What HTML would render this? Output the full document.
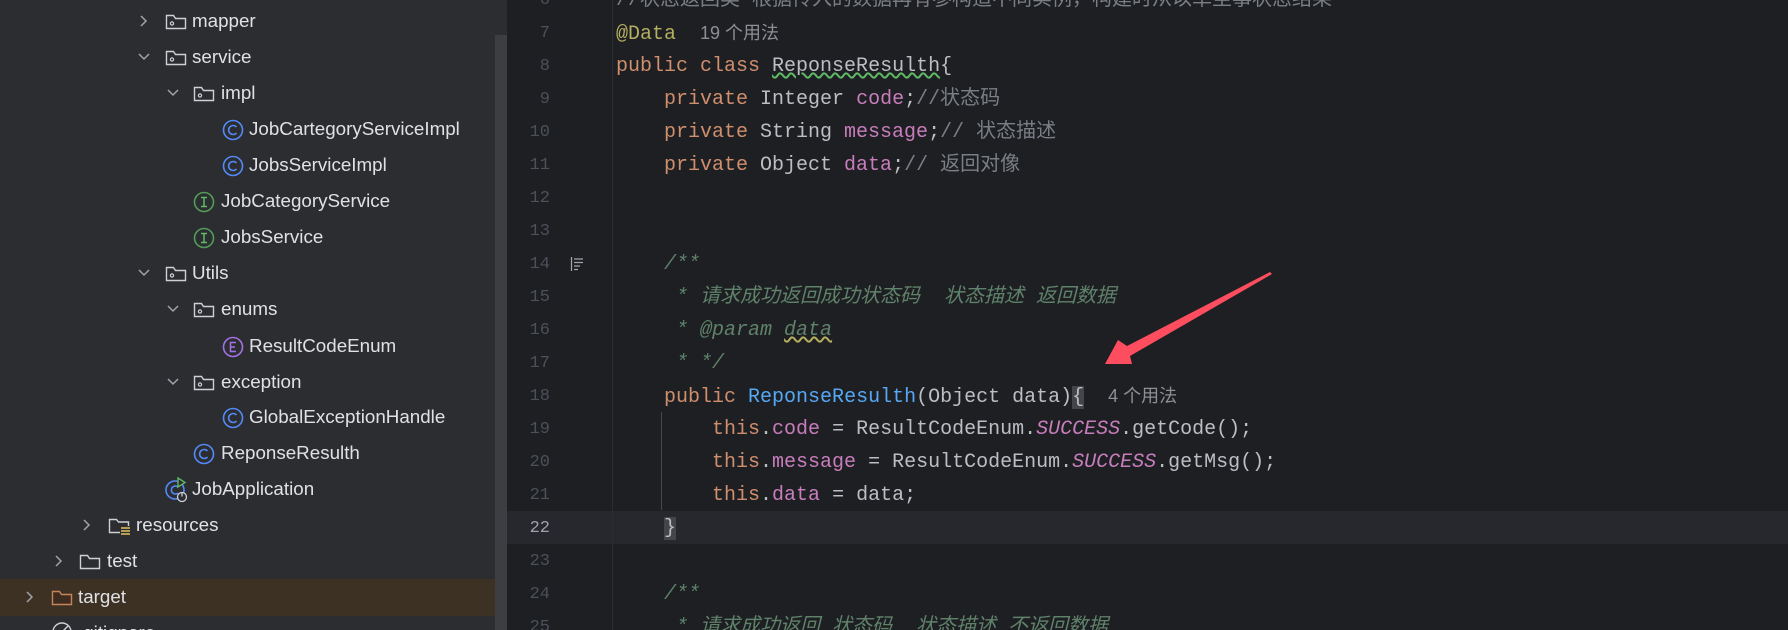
<!DOCTYPE html>
<html><head><meta charset="utf-8"><style>
*{margin:0;padding:0;box-sizing:border-box}
html,body{width:1788px;height:630px;overflow:hidden}
body{background:#1e1f22;position:relative;font-family:"Liberation Sans","Noto Sans CJK SC",sans-serif}
#side{position:absolute;left:0;top:0;width:507px;height:630px;background:#2b2d30}
#sb{position:absolute;left:495px;top:35px;width:12px;height:595px;background:#3c3e42}
.row{position:absolute;left:0;width:495px;height:36px;line-height:36px;color:#dfe1e5;font-size:18.8px;white-space:nowrap}
.row svg{position:absolute}
.row span{position:absolute}
.ln{position:absolute;left:500px;width:50px;text-align:right;color:#4b5059;font-family:"Liberation Mono",monospace;font-size:17px;height:33px;line-height:33px}
.cl{position:absolute;left:616px;height:33px;line-height:33px;font-family:"Liberation Mono","Noto Sans CJK SC",monospace;font-size:20px;color:#bcbec4;white-space:pre}
.k{color:#cf8e6d}.f{color:#c77dbb}.c{color:#7a7e85}.d{color:#5f826b;font-style:italic}.h{color:#8c8f94;font-family:"Liberation Sans","Noto Sans CJK SC",sans-serif;font-size:18px}.m{color:#56a8f5}.a{color:#b3ae60}.s{color:#c77dbb;font-style:italic}
.br{background:#43454a}
</style></head><body>
<div id="side">
<div id="sb"></div>
<div style="position:absolute;left:0;top:579px;width:495px;height:37px;background:#3d3124"></div>
</div>
<div class="row" style="top:3px"><svg style="left:138px;top:11px" width="12" height="14" viewBox="0 0 12 14"><path d="M3 2l5 5-5 5" stroke="#a0a3a8" stroke-width="1.5" fill="none"/></svg><svg style="left:165px;top:10px" width="22" height="18" viewBox="0 0 22 18"><path d="M1.5 3.5v12h19v-10h-10l-2-3h-7z" stroke="#ced0d6" stroke-width="1.4" fill="none"/><circle cx="7" cy="10.5" r="1.6" stroke="#ced0d6" stroke-width="1.2" fill="none"/></svg><span style="left:192px">mapper</span></div>
<div class="row" style="top:39px"><svg style="left:137px;top:12px" width="14" height="12" viewBox="0 0 14 12"><path d="M2 3l5 5 5-5" stroke="#a0a3a8" stroke-width="1.5" fill="none"/></svg><svg style="left:165px;top:10px" width="22" height="18" viewBox="0 0 22 18"><path d="M1.5 3.5v12h19v-10h-10l-2-3h-7z" stroke="#ced0d6" stroke-width="1.4" fill="none"/><circle cx="7" cy="10.5" r="1.6" stroke="#ced0d6" stroke-width="1.2" fill="none"/></svg><span style="left:192px">service</span></div>
<div class="row" style="top:75px"><svg style="left:166px;top:12px" width="14" height="12" viewBox="0 0 14 12"><path d="M2 3l5 5 5-5" stroke="#a0a3a8" stroke-width="1.5" fill="none"/></svg><svg style="left:193px;top:10px" width="22" height="18" viewBox="0 0 22 18"><path d="M1.5 3.5v12h19v-10h-10l-2-3h-7z" stroke="#ced0d6" stroke-width="1.4" fill="none"/><circle cx="7" cy="10.5" r="1.6" stroke="#ced0d6" stroke-width="1.2" fill="none"/></svg><span style="left:221px">impl</span></div>
<div class="row" style="top:111px"><svg style="left:222px;top:8px" width="22" height="22" viewBox="0 0 22 22"><circle cx="11" cy="11" r="9.5" stroke="#548af7" stroke-width="1.6" fill="none"/><path d="M14.5 8a4.5 4.5 0 1 0 0 6" stroke="#548af7" stroke-width="1.6" fill="none"/></svg><span style="left:249px">JobCartegoryServiceImpl</span></div>
<div class="row" style="top:147px"><svg style="left:222px;top:8px" width="22" height="22" viewBox="0 0 22 22"><circle cx="11" cy="11" r="9.5" stroke="#548af7" stroke-width="1.6" fill="none"/><path d="M14.5 8a4.5 4.5 0 1 0 0 6" stroke="#548af7" stroke-width="1.6" fill="none"/></svg><span style="left:249px">JobsServiceImpl</span></div>
<div class="row" style="top:183px"><svg style="left:193px;top:8px" width="22" height="22" viewBox="0 0 22 22"><circle cx="11" cy="11" r="9.5" stroke="#5fb865" stroke-width="1.6" fill="none" opacity=".8"/><path d="M8 6.5h6M8 15.5h6M11 6.5v9" stroke="#5fb865" stroke-width="1.5"/></svg><span style="left:221px">JobCategoryService</span></div>
<div class="row" style="top:219px"><svg style="left:193px;top:8px" width="22" height="22" viewBox="0 0 22 22"><circle cx="11" cy="11" r="9.5" stroke="#5fb865" stroke-width="1.6" fill="none" opacity=".8"/><path d="M8 6.5h6M8 15.5h6M11 6.5v9" stroke="#5fb865" stroke-width="1.5"/></svg><span style="left:221px">JobsService</span></div>
<div class="row" style="top:255px"><svg style="left:137px;top:12px" width="14" height="12" viewBox="0 0 14 12"><path d="M2 3l5 5 5-5" stroke="#a0a3a8" stroke-width="1.5" fill="none"/></svg><svg style="left:165px;top:10px" width="22" height="18" viewBox="0 0 22 18"><path d="M1.5 3.5v12h19v-10h-10l-2-3h-7z" stroke="#ced0d6" stroke-width="1.4" fill="none"/><circle cx="7" cy="10.5" r="1.6" stroke="#ced0d6" stroke-width="1.2" fill="none"/></svg><span style="left:192px">Utils</span></div>
<div class="row" style="top:291px"><svg style="left:166px;top:12px" width="14" height="12" viewBox="0 0 14 12"><path d="M2 3l5 5 5-5" stroke="#a0a3a8" stroke-width="1.5" fill="none"/></svg><svg style="left:193px;top:10px" width="22" height="18" viewBox="0 0 22 18"><path d="M1.5 3.5v12h19v-10h-10l-2-3h-7z" stroke="#ced0d6" stroke-width="1.4" fill="none"/><circle cx="7" cy="10.5" r="1.6" stroke="#ced0d6" stroke-width="1.2" fill="none"/></svg><span style="left:221px">enums</span></div>
<div class="row" style="top:328px"><svg style="left:222px;top:8px" width="22" height="22" viewBox="0 0 22 22"><circle cx="11" cy="11" r="9.5" stroke="#a571e6" stroke-width="1.6" fill="none"/><path d="M14 6.5H8.5v9H14M8.5 11H13" stroke="#a571e6" stroke-width="1.5" fill="none"/></svg><span style="left:249px">ResultCodeEnum</span></div>
<div class="row" style="top:364px"><svg style="left:166px;top:12px" width="14" height="12" viewBox="0 0 14 12"><path d="M2 3l5 5 5-5" stroke="#a0a3a8" stroke-width="1.5" fill="none"/></svg><svg style="left:193px;top:10px" width="22" height="18" viewBox="0 0 22 18"><path d="M1.5 3.5v12h19v-10h-10l-2-3h-7z" stroke="#ced0d6" stroke-width="1.4" fill="none"/><circle cx="7" cy="10.5" r="1.6" stroke="#ced0d6" stroke-width="1.2" fill="none"/></svg><span style="left:221px">exception</span></div>
<div class="row" style="top:399px"><svg style="left:222px;top:8px" width="22" height="22" viewBox="0 0 22 22"><circle cx="11" cy="11" r="9.5" stroke="#548af7" stroke-width="1.6" fill="none"/><path d="M14.5 8a4.5 4.5 0 1 0 0 6" stroke="#548af7" stroke-width="1.6" fill="none"/></svg><span style="left:249px">GlobalExceptionHandle</span></div>
<div class="row" style="top:435px"><svg style="left:193px;top:8px" width="22" height="22" viewBox="0 0 22 22"><circle cx="11" cy="11" r="9.5" stroke="#548af7" stroke-width="1.6" fill="none"/><path d="M14.5 8a4.5 4.5 0 1 0 0 6" stroke="#548af7" stroke-width="1.6" fill="none"/></svg><span style="left:221px">ReponseResulth</span></div>
<div class="row" style="top:471px"><svg style="left:165px;top:6px" width="24" height="26" viewBox="0 0 24 26"><circle cx="10" cy="13" r="9" stroke="#548af7" stroke-width="1.6" fill="none"/><path d="M13 10a4 4 0 1 0 0 6" stroke="#548af7" stroke-width="1.6" fill="none"/><path d="M13 1v9l7-4.5z" fill="#2b2d30" stroke="#5fb865" stroke-width="1.4"/><circle cx="17" cy="20" r="4.5" fill="#2b2d30" stroke="#ced0d6" stroke-width="1.3"/><path d="M17 15.5v4" stroke="#ced0d6" stroke-width="1.3"/></svg><span style="left:192px">JobApplication</span></div>
<div class="row" style="top:507px"><svg style="left:81px;top:11px" width="12" height="14" viewBox="0 0 12 14"><path d="M3 2l5 5-5 5" stroke="#a0a3a8" stroke-width="1.5" fill="none"/></svg><svg style="left:108px;top:9px" width="24" height="20" viewBox="0 0 24 20"><path d="M12 16.5H1.5v-13h7l2 2.5h10v4" stroke="#ced0d6" stroke-width="1.4" fill="none"/><path d="M13 12h9M13 15h9M13 18h9" stroke="#e5c15c" stroke-width="1.6"/></svg><span style="left:136px">resources</span></div>
<div class="row" style="top:543px"><svg style="left:53px;top:11px" width="12" height="14" viewBox="0 0 12 14"><path d="M3 2l5 5-5 5" stroke="#a0a3a8" stroke-width="1.5" fill="none"/></svg><svg style="left:79px;top:10px" width="22" height="18" viewBox="0 0 22 18"><path d="M1.5 3.5v12h19v-10h-10l-2-3h-7z" stroke="#ced0d6" stroke-width="1.4" fill="none"/></svg><span style="left:107px">test</span></div>
<div class="row" style="top:579px"><svg style="left:24px;top:11px" width="12" height="14" viewBox="0 0 12 14"><path d="M3 2l5 5-5 5" stroke="#a0a3a8" stroke-width="1.5" fill="none"/></svg><svg style="left:51px;top:10px" width="22" height="18" viewBox="0 0 22 18"><path d="M1.5 3.5v12h19v-10h-10l-2-3h-7z" stroke="#c7845a" stroke-width="1.4" fill="#3f2c20"/></svg><span style="left:78px">target</span></div>
<div class="row" style="top:615px"><svg style="left:51px;top:6px" width="24" height="24" viewBox="0 0 24 24"><circle cx="11" cy="11" r="9" stroke="#ced0d6" stroke-width="1.4" fill="none"/><path d="M5 17L17 5" stroke="#ced0d6" stroke-width="1.4"/></svg><span style="left:78px">.gitignore</span></div>

<div style="position:absolute;left:507px;top:511px;width:1281px;height:33px;background:#26282e"></div>
<div style="position:absolute;left:612px;top:0;width:1px;height:630px;background:#2b2d30"></div>
<div style="position:absolute;left:661px;top:412px;width:1px;height:98px;background:#46484d"></div>

<div class="ln" style="top:-16px">6</div>
<div class="ln" style="top:17px">7</div>
<div class="ln" style="top:50px">8</div>
<div class="ln" style="top:83px">9</div>
<div class="ln" style="top:116px">10</div>
<div class="ln" style="top:149px">11</div>
<div class="ln" style="top:182px">12</div>
<div class="ln" style="top:215px">13</div>
<div class="ln" style="top:248px">14</div>
<div class="ln" style="top:281px">15</div>
<div class="ln" style="top:314px">16</div>
<div class="ln" style="top:347px">17</div>
<div class="ln" style="top:380px">18</div>
<div class="ln" style="top:413px">19</div>
<div class="ln" style="top:446px">20</div>
<div class="ln" style="top:479px">21</div>
<div class="ln" style="top:512px;color:#a1a3ab">22</div>
<div class="ln" style="top:545px">23</div>
<div class="ln" style="top:578px">24</div>
<div class="ln" style="top:611px">25</div>
<svg style="position:absolute;left:570px;top:257px" width="14" height="14" viewBox="0 0 14 14"><path d="M1.5 0v14M4 2h9M4 5.5h9M4 9h6M4 12.5h4" stroke="#a1a3ab" stroke-width="1.3"/></svg>

<div class="cl" style="top:-16px"><span class="c">//状态返回类 根据传入的数据再有参构造不同实例，构建时从以单至事状态结果</span></div>
<div class="cl" style="top:17px"><span class="a">@Data</span>  <span class="h">19 个用法</span></div>
<div class="cl" style="top:50px"><span class="k">public class</span> <span style="text-decoration:underline wavy #5fb865">ReponseResulth</span>{</div>
<div class="cl" style="top:83px">    <span class="k">private</span> Integer <span class="f">code</span>;<span class="c">//状态码</span></div>
<div class="cl" style="top:116px">    <span class="k">private</span> String <span class="f">message</span>;<span class="c">// 状态描述</span></div>
<div class="cl" style="top:149px">    <span class="k">private</span> Object <span class="f">data</span>;<span class="c">// 返回对像</span></div>
<div class="cl" style="top:248px">    <span class="d">/**</span></div>
<div class="cl" style="top:281px">     <span class="d">* 请求成功返回成功状态码  状态描述 返回数据</span></div>
<div class="cl" style="top:314px">     <span class="d">* @param <span style="text-decoration:underline wavy #b3ae60">data</span></span></div>
<div class="cl" style="top:347px">     <span class="d">* */</span></div>
<div class="cl" style="top:380px">    <span class="k">public</span> <span class="m">ReponseResulth</span>(Object data)<span class="br">{</span>  <span class="h">4 个用法</span></div>
<div class="cl" style="top:413px">        <span class="k">this</span>.<span class="f">code</span> = ResultCodeEnum.<span class="s">SUCCESS</span>.getCode();</div>
<div class="cl" style="top:446px">        <span class="k">this</span>.<span class="f">message</span> = ResultCodeEnum.<span class="s">SUCCESS</span>.getMsg();</div>
<div class="cl" style="top:479px">        <span class="k">this</span>.<span class="f">data</span> = data;</div>
<div class="cl" style="top:512px">    <span class="br">}</span></div>
<div class="cl" style="top:578px">    <span class="d">/**</span></div>
<div class="cl" style="top:611px">     <span class="d">* 请求成功返回 状态码  状态描述 不返回数据</span></div>

<svg style="position:absolute;left:0;top:0" width="1788" height="630"><polygon points="1270,272 1127,346 1118,340 1105,364 1132,364 1130,356 1272,274" fill="#ff4d60"/></svg>
</body></html>
